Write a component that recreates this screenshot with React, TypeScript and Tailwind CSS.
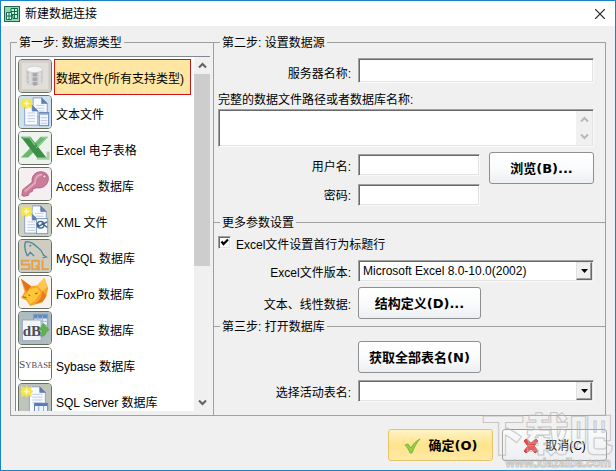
import React, { useState } from 'react';

const paper = (x: number, y: number, w: number, h: number) => (
  <g>
    <path
      d={`M${x} ${y}h${w - 6}l6 6v${h - 6}h-${w}z`}
      fill="#f7faff"
      stroke="#8a9fc4"
      strokeWidth="1"
    />
    <path d={`M${x + w - 6} ${y}v6h6z`} fill="#5f80b8" stroke="#56739f" strokeWidth="0.6" />
    <path
      d={`M${x + 3} ${y + 8}h${w - 6}M${x + 3} ${y + 11}h${w - 6}M${x + 3} ${y + 14}h${w - 6}M${x + 3} ${y + 17}h${w - 6}`}
      stroke="#bccadf"
      strokeWidth="1"
    />
  </g>
);

const spark = (
  <g>
    <path d="M2 2l4 2 2-2 2 2 4-2-1 4 2 2-2 2 1 4-4-2-2 2-2-2-4 2 1-4-2-2 2-2z" fill="#f6e44e" />
    <path d="M8 5v6M5 8h6" stroke="#fffbd0" strokeWidth="1.5" />
  </g>
);

function FileIcon() {
  return (
    <g>
      <rect width="34" height="34" fill="#cfe0ee" />
      {paper(15, 2, 15, 20)}
      {paper(6, 10, 14, 21)}
      <rect x="21.5" y="17.5" width="10" height="14" fill="#f2f7ff" stroke="#6482b5" />
      <path d="M22 19h9" stroke="#8ea7d0" strokeWidth="2" />
      <path d="M23 23h7M23 26h7M23 29h7" stroke="#b7c6df" />
      {spark}
    </g>
  );
}

function DataIcon() {
  return (
    <g>
      <rect width="34" height="34" fill="#d3cfc8" />
      <rect x="3" y="3" width="28" height="28" fill="#e2dfdb" />
      <path d="M8 10v13c0 5 17 5 17 0V10z" fill="#c3c3c5" />
      <path d="M12 12v14M22 12v14" stroke="#dededf" strokeWidth="3" />
      <path d="M17 13v14" stroke="#a6a6aa" strokeWidth="4" />
      <ellipse cx="16.5" cy="10" rx="8.500" ry="3.500" fill="#f4f4f5" stroke="#cbcbcd" />
      <path d="M8 15c0 4 17 4 17 0M8 20c0 4 17 4 17 0" fill="none" stroke="#d8d8da" />
    </g>
  );
}

function ExcelIcon() {
  return (
    <g>
      <rect width="34" height="34" fill="#edf2ec" />
      <path d="M19 28h12v-7" fill="none" stroke="#a8cfaa" strokeWidth="3" />
      <path d="M23 5h8L10 27H2l10-10z" fill="#6db673" />
      <path d="M2 5h10l17 22H19z" fill="#3c9046" />
      <path d="M4 6h7l6 8" fill="none" stroke="#85c98a" strokeWidth="1.500" />
      <path d="M24 6h5L18 17" fill="none" stroke="#9cd49f" />
    </g>
  );
}

function KeyIcon() {
  return (
    <g>
      <rect width="34" height="34" fill="#f6eff1" />
      <path
        d="M3 29l1-6 10-8c-1-6 3-11 9-11 6 0 9 4 8 9-1 6-7 9-12 8l-4 1-1 3-3 1-1 3-5 1z"
        fill="#cb7c98"
        stroke="#b0607e"
      />
      <path d="M6 25l11-9c0-6 3-9 8-9" fill="none" stroke="#e2abbd" strokeWidth="2" />
      <circle cx="27" cy="9" r="1.800" fill="#f5e3e8" stroke="#a9526f" />
    </g>
  );
}

function XmlIcon() {
  return (
    <g>
      <rect width="34" height="34" fill="#cfcfc2" />
      {paper(14, 2, 15, 20)}
      {paper(6, 11, 14, 20)}
      <rect x="18.5" y="15.5" width="12" height="16" fill="#f4f8ff" stroke="#7e97bd" />
      <circle cx="23" cy="22" r="3.500" fill="none" stroke="#42658a" strokeWidth="1.500" />
      <path d="M20 24l10-5M24 20l6 5M19 20l3 4" stroke="#42658a" strokeWidth="1.500" />
      {spark}
    </g>
  );
}

function MysqlIcon() {
  return (
    <g>
      <rect width="34" height="34" fill="#cfccc1" />
      <path
        d="M9 17C7 13 5 7 7 2c5-1 9 2 13 6 3 2 5 5 6 8l3 2-4 1M9 17l3-4 4 4"
        fill="none"
        stroke="#5489a0"
        strokeWidth="1.500"
      />
      <circle cx="12" cy="6" r="1" fill="#427f99" />
      <path
        d="M11 22H3v4h8v5H2M14 22h7v9h-7zM18 27l4 5M25 21v10h7"
        fill="none"
        stroke="#e5a04a"
        strokeWidth="2"
      />
    </g>
  );
}

function FoxIcon() {
  return (
    <g>
      <rect width="34" height="34" fill="#f7f4f0" />
      <path d="M2 3l11 8 6-1 8-8 4 11-2 9-4 6-13 4-4-6-6-3 4-6z" fill="#f5a42c" />
      <path d="M19 10l8-8 3 10-5 4z" fill="#ffc654" />
      <path d="M2 3l11 8-5 6z" fill="#df741d" />
      <path d="M11 14l8-2 4 6-6 8-5 4-3-5-6-3 5-3z" fill="#ffc637" />
      <path d="M25 16l4 5-4 6-8 3 6-6z" fill="#e57a20" />
      <path d="M4 22l4 1M10 20l2 1M17 19l3-1" stroke="#8c4c1c" strokeWidth="1" />
    </g>
  );
}

function DbaseIcon() {
  return (
    <g>
      <rect width="34" height="34" fill="#aebdbf" />
      <rect x="15.5" y="2.500" width="15" height="18" fill="#e5effa" stroke="#7896bd" />
      <path d="M16 5h14" stroke="#628bbd" strokeWidth="4" />
      <path d="M20 4v16M25 4v16M16 10h14M16 14h14" stroke="#a2b9d3" />
      <rect x="3.500" y="8.500" width="20" height="22" fill="#f3f5f8" stroke="#97a4b3" />
      <text x="4" y="26" fontFamily="Liberation Serif, serif" fontSize="16" fontWeight="700" fill="#4d4e55">
        dB
      </text>
      <path d="M21 25c4 0 4-4 3-6l-3 1 5-8 6 7-3 1c0 5-3 7-8 5z" fill="#5eb349" stroke="#48953a" strokeWidth="0.500" />
    </g>
  );
}

function SybaseIcon() {
  return (
    <g>
      <rect width="34" height="34" fill="#ffffff" />
      <text x="0" y="21" fontFamily="Liberation Serif, serif" fill="#4b4750">
        <tspan fontSize="12">S</tspan>
        <tspan fontSize="9">YBASE</tspan>
      </text>
    </g>
  );
}

function SqlServerIcon() {
  return (
    <g>
      <rect width="34" height="34" fill="#bfc4ba" />
      {paper(11, 3, 17, 28)}
      <rect x="16.5" y="20.5" width="14" height="13" fill="#eef4ff" stroke="#5d7eb5" />
      <path d="M17 22h13" stroke="#527bb9" strokeWidth="3" />
      <path d="M21 23v10M26 23v10" stroke="#8ba3cb" />
      {spark}
    </g>
  );
}

const sources = [
  { name: '数据文件(所有支持类型)', Icon: DataIcon },
  { name: '文本文件', Icon: FileIcon },
  { name: 'Excel 电子表格', Icon: ExcelIcon },
  { name: 'Access 数据库', Icon: KeyIcon },
  { name: 'XML 文件', Icon: XmlIcon },
  { name: 'MySQL 数据库', Icon: MysqlIcon },
  { name: 'FoxPro 数据库', Icon: FoxIcon },
  { name: 'dBASE 数据库', Icon: DbaseIcon },
  { name: 'Sybase 数据库', Icon: SybaseIcon },
  { name: 'SQL Server 数据库', Icon: SqlServerIcon },
];

const sunken =
  'block w-full min-w-0 rounded-none border border-t-[#a0a0a0] border-l-[#a0a0a0] border-r-[#fafafa] border-b-[#fafafa] bg-white px-1 shadow-[inset_1px_1px_0_#696969,inset_-1px_-1px_0_#e3e3e3] outline-none';
const row = 'grid grid-cols-[133px_1fr] gap-x-[7px]';
const label = 'pt-1 text-right';
const button =
  'h-8 rounded-[3px] border border-[#8e8f8f] bg-gradient-to-b from-white via-[#fafbfc] to-[#eceff3] pt-0.5 text-center text-[13px] font-bold leading-[18px]';
const boldFont = "font-['DejaVu_Sans','Noto_Sans_CJK_SC',sans-serif]";

function Chevron({ up = false, color }: { up?: boolean; color: string }) {
  return (
    <svg width="9" height="7" viewBox="0 0 9 7" aria-hidden="true">
      <path d={up ? 'M1 5.500L4.500 2L8 5.500' : 'M1 1.500L4.500 5L8 1.500'} fill="none" stroke={color} strokeWidth="2" />
    </svg>
  );
}

function Select({ id, options }: { id: string; options: string[] }) {
  return (
    <div className="relative">
      <select id={id} className={`${sunken} h-[22px] appearance-none`}>
        {options.map((o) => (
          <option key={o}>{o}</option>
        ))}
      </select>
      <span className="pointer-events-none absolute top-0.5 right-0.5 bottom-0.5 flex w-4 items-center justify-center border border-t-[#e3e3e3] border-r-[#696969] border-b-[#696969] border-l-[#e3e3e3] bg-[#f0f0f0] shadow-[inset_-1px_-1px_0_#a0a0a0]">
        <svg width="7" height="4" viewBox="0 0 7 4" aria-hidden="true">
          <path d="M0 0h7L3.500 4z" fill="#000" />
        </svg>
      </span>
    </div>
  );
}

function Group({ title, className, children }: { title: string; className: string; children: React.ReactNode }) {
  return (
    <fieldset className={`min-w-0 border-t border-l border-[#a0a0a0] pl-1 ${className}`}>
      <legend className="ml-0.5 px-0.5 pt-0.5 leading-4">{title}</legend>
      {children}
    </fieldset>
  );
}

export default function App() {
  const [selected, setSelected] = useState(0);
  return (
    <div className="relative flex min-h-screen flex-col overflow-hidden border border-[#1883c7] bg-[#f0f0f0] font-['Liberation_Sans','Noto_Sans_CJK_SC',sans-serif] text-xs leading-[18px] text-black">
      <header className="flex h-[25px] items-center bg-white pr-[10px] pl-[3px]">
        <svg width="16" height="16" viewBox="0 0 16 16" aria-hidden="true">
          <rect x="0.5" y="0.5" width="15" height="15" fill="#8fd8b6" stroke="#22644f" />
          <path d="M7 2.500h6.500v10H9v-3H7z" fill="#c9f5df" stroke="#12684a" />
          <path d="M2.500 6.500h5v7h-5z" fill="#e0fff0" stroke="#12684a" />
          <path d="M7 5.500h6M7 8.500h6M10.500 3v9M3 10h4M5 7v6" stroke="#12684a" />
        </svg>
        <h1 className="ml-[5px] flex-1">新建数据连接</h1>
        <button aria-label="关闭">
          <svg width="10" height="10" viewBox="0 0 10 10">
            <path d="M0 0l10 10M10 0L0 10" stroke="#222" strokeWidth="1.200" />
          </svg>
        </button>
      </header>

      <main className="flex px-[9px] pt-[7px]">
        <Group title="第一步: 数据源类型" className="w-[203px] shrink-0 border-b border-b-[#a0a0a0] pr-[3px] pb-1">
          <div className="mt-[5px] flex h-[355px] border-t border-l border-[#828790] bg-white">
            <ul className="min-w-0 flex-1 overflow-hidden pt-0.5 pl-0.5">
              {sources.map(({ name, Icon }, i) => (
                <li key={name}>
                  <button className="flex h-9 w-full items-start text-left" onClick={() => setSelected(i)}>
                    <svg width="34" height="34" viewBox="0 0 34 34" className="shrink-0 rounded border border-[#657260]" aria-hidden="true">
                      <Icon />
                    </svg>
                    <span
                      className={
                        i === selected
                          ? 'ml-0.5 flex h-9 w-[137px] items-center border border-[#c8181c] bg-[#ffe6a2] pt-[3px] pl-px whitespace-nowrap'
                          : 'ml-0.5 flex h-9 w-[137px] items-center border border-transparent pt-[3px] pl-px whitespace-nowrap'
                      }
                    >
                      {name}
                    </span>
                  </button>
                </li>
              ))}
            </ul>
            <div className="flex w-4 shrink-0 flex-col items-center bg-[#f0f0f0]">
              <span className="flex h-[17px] items-center"><Chevron up color="#606060" /></span>
              <span className="h-[192px] w-full bg-[#cdcdcd]" />
              <span className="mt-auto flex h-[17px] items-center"><Chevron color="#606060" /></span>
            </div>
          </div>
        </Group>

        <div className="min-w-0 flex-1">
          <Group title="第二步: 设置数据源" className="border-r border-r-[#a0a0a0] pr-[11px] pb-4">
            <div className={`${row} mt-[7px]`}>
              <label htmlFor="server" className="pt-[7px] text-right">服务器名称:</label>
              <input id="server" className={`${sunken} h-[25px]`} />
            </div>
            <label htmlFor="path" className="mt-[8px] block">完整的数据文件路径或者数据库名称:</label>
            <div className="relative">
              <textarea id="path" className={`${sunken} h-[38px] resize-none`} />
              <span className="pointer-events-none absolute top-0.5 right-0.5 bottom-0.5 flex w-4 flex-col items-center justify-between bg-[#f0f0f0] py-[5px]">
                <Chevron up color="#b8b8b8" />
                <Chevron color="#b8b8b8" />
              </span>
            </div>
            <div className="mt-[7px] flex items-start gap-[9px]">
              <div className="flex flex-1 flex-col gap-2">
                <div className={row}>
                  <label htmlFor="user" className={label}>用户名:</label>
                  <input id="user" className={`${sunken} h-[22px]`} />
                </div>
                <div className={row}>
                  <label htmlFor="pwd" className="pt-[3px] text-right">密码:</label>
                  <input id="pwd" type="password" className={`${sunken} h-[22px]`} />
                </div>
              </div>
              <button className={`${button} ${boldFont} -mt-0.5 w-[105px]`}>浏览(B)...</button>
            </div>
          </Group>

          <Group title="更多参数设置" className="-mt-[9px] border-r border-r-[#a0a0a0] pr-[11px] pb-[7px]">
            <label className="mt-[5px] flex items-start gap-[5px]">
              <span className="relative size-[13px]">
                <input
                  type="checkbox"
                  defaultChecked
                  className="peer block size-[13px] appearance-none border border-t-[#a0a0a0] border-l-[#a0a0a0] border-r-[#fafafa] border-b-[#fafafa] bg-white shadow-[inset_1px_1px_0_#696969,inset_-1px_-1px_0_#e3e3e3]"
                />
                <svg width="13" height="13" viewBox="0 0 13 13" className="pointer-events-none absolute inset-0 hidden peer-checked:block" aria-hidden="true">
                  <path d="M3.500 5.500L5.500 8L10 3.500" fill="none" stroke="#000" strokeWidth="2.200" />
                </svg>
              </span>
              <span>Excel文件设置首行为标题行</span>
            </label>
            <div className={`${row} mt-[6px]`}>
              <label htmlFor="version" className={label}>Excel文件版本:</label>
              <Select id="version" options={['Microsoft Excel 8.0-10.0(2002)']} />
            </div>
            <div className={`${row} mt-[5px] items-center`}>
              <span className="pt-1 text-right">文本、线性数据:</span>
              <button className={`${button} ${boldFont} w-[123px]`}>结构定义(D)...</button>
            </div>
          </Group>

          <Group title="第三步: 打开数据库" className="-mt-[9px] border-r border-b border-r-[#a0a0a0] border-b-[#a0a0a0] pr-[11px] pb-[13px]">
            <div className={`${row} mt-[6px]`}>
              <button className={`${button} ${boldFont} col-start-2 w-[123px]`}>获取全部表名(N)</button>
            </div>
            <div className={`${row} mt-[7px]`}>
              <label htmlFor="table" className={label}>选择活动表名:</label>
              <Select id="table" options={['']} />
            </div>
          </Group>
        </div>
      </main>

      <footer className="flex justify-end gap-[9px] pt-[13px] pr-2 pb-[9px]">
        <button className={`${boldFont} flex h-8 w-[105px] items-center justify-center gap-2 rounded-[3px] border border-[#e2c56a] bg-gradient-to-b from-[#fff3c4] via-[#ffe48c] to-[#ffe9a5] pt-0.5 text-[13px] font-bold`}>
          <svg width="17" height="16" viewBox="0 0 17 16" aria-hidden="true">
            <path d="M1 7l3-1 3 4c2-4 5-7 9-9-4 4-6 9-8 14H6C5 12 3 9 1 7z" fill="#94d13f" stroke="#7db544" />
          </svg>
          确定(O)
        </button>
        <button className="flex h-8 w-[105px] items-center justify-center gap-[6px] rounded-[3px] border border-[#9a9a9a] bg-gradient-to-b from-[#fafafa] to-[#eeeff1] pt-0.5">
          <svg width="16" height="16" viewBox="0 0 16 16" aria-hidden="true">
            <path d="M3 1l5 4 5-4 2 2-4 5 4 5-3 2-4-4-5 4-2-2 4-5-4-5z" fill="#e84848" stroke="#cf4448" />
          </svg>
          取消(C)
        </button>
      </footer>

      <div className="pointer-events-none absolute right-0.5 bottom-0 flex flex-col items-end whitespace-nowrap opacity-70" aria-hidden="true">
        <span className="text-[44px] leading-[42px] font-black text-white/20 [-webkit-text-stroke:1px_#b5b5b5]">下载吧</span>
        <span className="pr-0.5 text-xs leading-[13px] font-bold text-white/60 [-webkit-text-stroke:1px_#b5b5b5]">www.xiazaiba.com</span>
      </div>
    </div>
  );
}
